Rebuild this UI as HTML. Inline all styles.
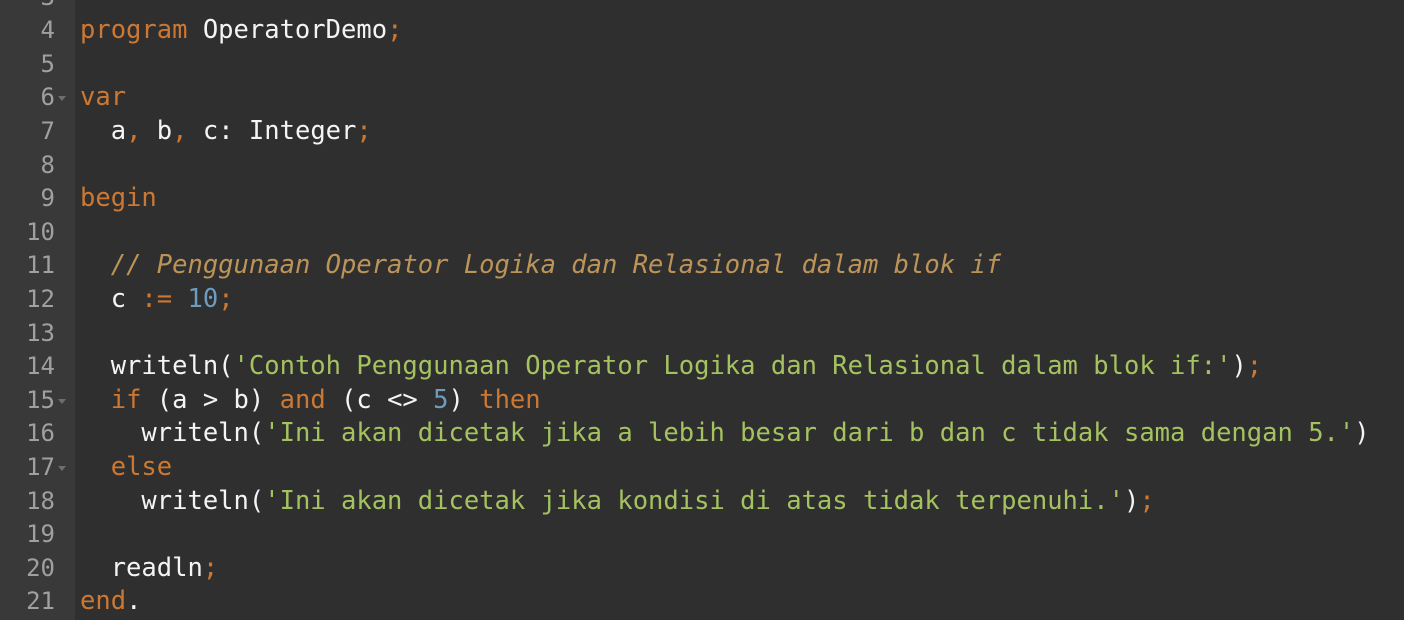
<!DOCTYPE html>
<html><head><meta charset="utf-8"><style>
html,body{margin:0;padding:0;width:1404px;height:620px;overflow:hidden;background:#2f2f2f;}
#g{position:absolute;left:0;top:0;width:75px;height:620px;background:#393939;}
#c{position:absolute;left:0;top:-19.4px;font-family:"DejaVu Sans Mono","Liberation Mono",monospace;font-size:25.5px;line-height:33.6px;}
.l{height:33.6px;position:relative;white-space:pre;}
.n{position:absolute;left:0;text-align:right;color:#a0a0a0;width:55px;font-size:24px;}
.t{position:absolute;left:80px;color:#f4f4f4;}
.f{position:absolute;left:58px;top:15px;width:0;height:0;border-left:4px solid transparent;border-right:4px solid transparent;border-top:5px solid #6e6e6e;}
.k{color:#cc7833}.s{color:#a5c261}.m{color:#6d9cbe}.cm{color:#bc9458;font-style:italic}
</style></head><body>
<div id="g"></div>
<div id="c">
<div class="l"><span class="n">3</span><span class="t"></span></div>
<div class="l"><span class="n">4</span><span class="t"><span class="k">program</span> OperatorDemo<span class="k">;</span></span></div>
<div class="l"><span class="n">5</span><span class="t"></span></div>
<div class="l"><span class="n">6</span><i class="f"></i><span class="t"><span class="k">var</span></span></div>
<div class="l"><span class="n">7</span><span class="t">  a<span class="k">,</span> b<span class="k">,</span> c: Integer<span class="k">;</span></span></div>
<div class="l"><span class="n">8</span><span class="t"></span></div>
<div class="l"><span class="n">9</span><span class="t"><span class="k">begin</span></span></div>
<div class="l"><span class="n">10</span><span class="t"></span></div>
<div class="l"><span class="n">11</span><span class="t">  <span class="cm">// Penggunaan Operator Logika dan Relasional dalam blok if</span></span></div>
<div class="l"><span class="n">12</span><span class="t">  c <span class="k">:=</span> <span class="m">10</span><span class="k">;</span></span></div>
<div class="l"><span class="n">13</span><span class="t"></span></div>
<div class="l"><span class="n">14</span><span class="t">  writeln(<span class="s">'Contoh Penggunaan Operator Logika dan Relasional dalam blok if:'</span>)<span class="k">;</span></span></div>
<div class="l"><span class="n">15</span><i class="f"></i><span class="t">  <span class="k">if</span> (a &gt; b) <span class="k">and</span> (c &lt;&gt; <span class="m">5</span>) <span class="k">then</span></span></div>
<div class="l"><span class="n">16</span><span class="t">    writeln(<span class="s">'Ini akan dicetak jika a lebih besar dari b dan c tidak sama dengan 5.'</span>)</span></div>
<div class="l"><span class="n">17</span><i class="f"></i><span class="t">  <span class="k">else</span></span></div>
<div class="l"><span class="n">18</span><span class="t">    writeln(<span class="s">'Ini akan dicetak jika kondisi di atas tidak terpenuhi.'</span>)<span class="k">;</span></span></div>
<div class="l"><span class="n">19</span><span class="t"></span></div>
<div class="l"><span class="n">20</span><span class="t">  readln<span class="k">;</span></span></div>
<div class="l"><span class="n">21</span><span class="t"><span class="k">end</span>.</span></div>
</div>
</body></html>
